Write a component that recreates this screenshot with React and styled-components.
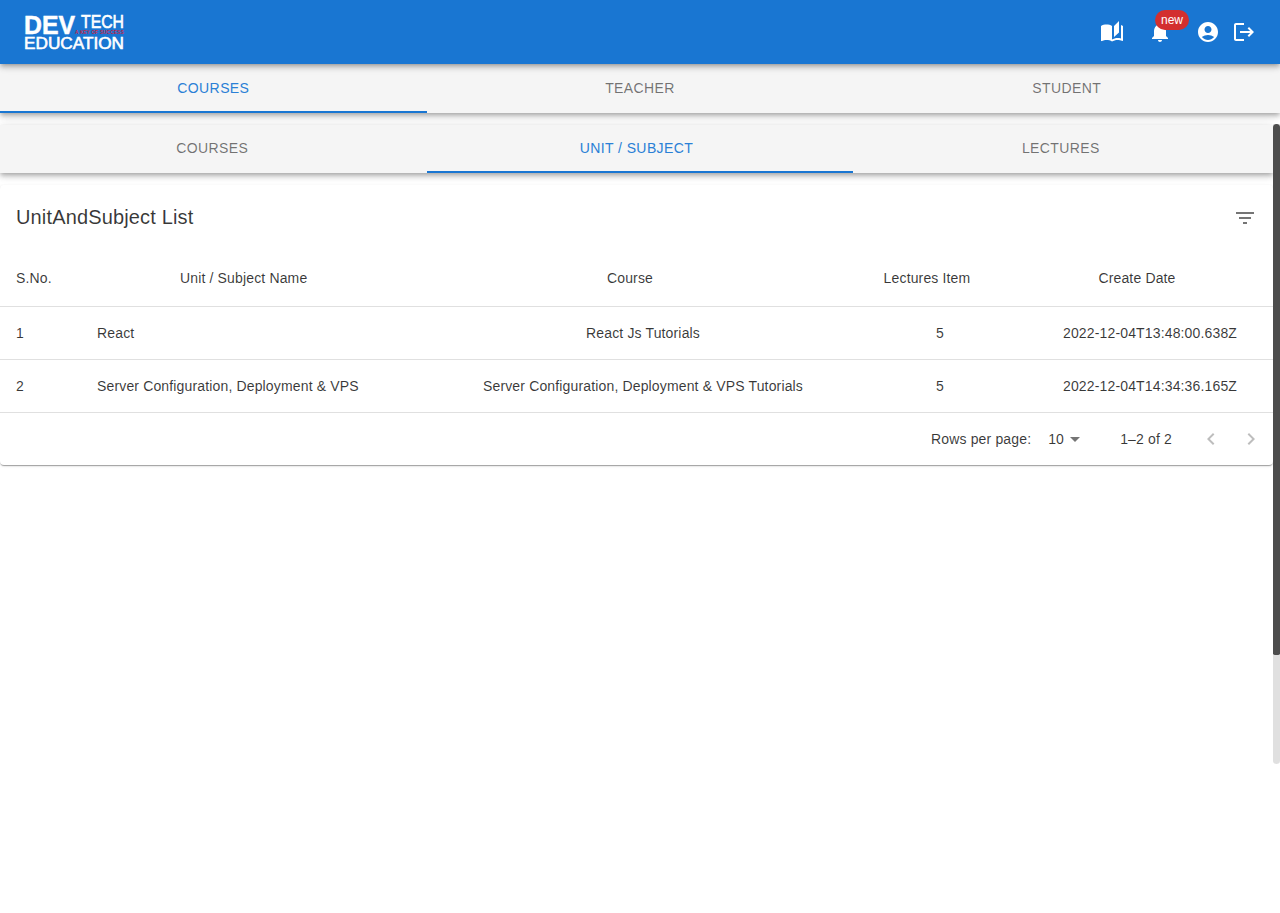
import React from "react";
import styled, { createGlobalStyle } from "styled-components";

const Global = createGlobalStyle`
  html, body { margin: 0; padding: 0; background: #fff; height: 100%; overflow: hidden; }
  body { font-family: "Liberation Sans", Arial, sans-serif; font-size: 14px; letter-spacing: 0.01071em; color: rgba(0,0,0,.78); }
  * { box-sizing: border-box; }
`;

const Page = styled.div`height: 913px; display: flex; flex-direction: column;`;
const Header = styled.header`
  height: 64px; flex: none; background: #1976d2; display: flex; align-items: center; justify-content: space-between;
  padding: 0 24px; position: relative; z-index: 3;
  box-shadow: 0 2px 4px -1px rgba(0,0,0,.2), 0 4px 5px 0 rgba(0,0,0,.14), 0 1px 10px 0 rgba(0,0,0,.12);
`;
const Actions = styled.div`display: flex; align-items: center;`;
const ActionBtn = styled.div`
  width: ${p => (p.$bare ? 24 : 48)}px; height: 48px; display: flex; align-items: center; justify-content: center; position: relative; color: #fff;
`;
const Badge = styled.span`
  position: absolute; left: 19px; top: 2px; width: 34px; height: 20px; border-radius: 10px; background: #d32f2f; color: #fff;
  font-size: 12px; font-weight: 400; display: flex; align-items: center; justify-content: center; letter-spacing: 0;
`;
const TabBar = styled.nav`
  position: relative; display: flex; height: 48px; flex: none; background: #f5f5f5; margin-top: ${p => p.$top || 0}px; z-index: 2;
  box-shadow: 0 2px 4px -1px rgba(0,0,0,.2), 0 4px 5px 0 rgba(0,0,0,.14), 0 1px 10px 0 rgba(0,0,0,.12);
`;
const Tab = styled.div`
  flex: 1; display: flex; align-items: center; justify-content: center; font-size: 14px; font-weight: 400; letter-spacing: 0.02857em; text-transform: uppercase;
  padding-bottom: 2px; color: ${p => (p.$on ? "#2a80d6" : "rgba(0,0,0,.55)")};
`;
const Indicator = styled.span`
  position: absolute; bottom: 0; height: 2px; background: #1976d2; left: ${p => p.$left}px; width: ${p => p.$width}px;
`;
const Scroller = styled.div`display: flex; height: 640px; margin-top: 11px; flex: none;`;
const Content = styled.main`width: 1273px; flex: none; padding-top: 1px;`;
const Track = styled.div`
  width: 7px; flex: none; background: #e0e0e0; border-radius: 0 0 4px 4px; overflow: hidden; position: relative; z-index: 3; display: flex; flex-direction: column;
`;
const Thumb = styled.div`height: 531px; background: #4d4d4d; border-radius: 4px 4px 2px 2px;`;
const Paper = styled.section`
  margin-top: 12px; background: #fff; border-radius: 4px;
  box-shadow: 0 2px 1px -1px rgba(0,0,0,.2), 0 1px 1px 0 rgba(0,0,0,.14), 0 1px 3px 0 rgba(0,0,0,.12);
`;
const Toolbar = styled.div`height: 65px; display: flex; align-items: center; justify-content: space-between; padding: 0 16px;`;
const Title = styled.h2`margin: 0 0 2px; font-size: 20px; font-weight: 400; letter-spacing: 0.0075em; line-height: 1.6; color: rgba(0,0,0,.78);`;
const Filter = styled.div`color: rgba(0,0,0,.54); display: flex;`;
const Row = styled.div`
  display: grid; grid-template-columns: 81px 372px 380px 214px 206px; padding-right: 20px; align-items: center;
  height: ${p => (p.$head ? 57 : 53)}px; border-bottom: 1px solid #e0e0e0;
`;
const Cell = styled.div`
  text-align: ${p => p.$align || "center"}; padding: 0 ${p => p.$pr || 0}px 0 ${p => p.$pl || 0}px; white-space: nowrap; line-height: 1.43;
`;
const Footer = styled.div`height: 52px; display: flex; align-items: center; justify-content: flex-end;`;
const Rows = styled.span`margin-right: 17px;`;
const Select = styled.span`display: flex; align-items: center; width: 72px;`;
const Caret = styled.span`display: flex; color: rgba(0,0,0,.54); margin-left: -1px;`;
const Range = styled.span`margin-right: 27px;`;
const Pager = styled.span`display: flex; align-items: center; gap: 16px; margin-right: 10px; color: rgba(0,0,0,.26);`;
const LogoMark = styled.svg`display: block; overflow: visible;`;

const Icon = ({ d, size = 24 }) => (
  <svg width={size} height={size} viewBox="0 0 24 24" fill="currentColor"><path d={d} /></svg>
);

const icons = {
  book: "M19 1l-5 5v11l5-4.5V1zM1 6v14.65c0 .25.25.5.5.5.1 0 .15-.05.25-.05C3.1 20.45 5.05 20 6.5 20c1.95 0 4.05.4 5.5 1.5 1.35-.85 3.8-1.5 5.5-1.5 1.65 0 3.35.3 4.75 1.05.1.05.15.05.25.05.25 0 .5-.25.5-.5V6c-.6-.45-1.25-.75-2-1v13.5c-1.1-.35-2.3-.5-3.5-.5-1.7 0-4.15.65-5.5 1.5V6c-1.45-1.1-3.55-1.5-5.5-1.5S2.45 4.9 1 6z",
  bell: "M12 22c1.1 0 2-.9 2-2h-4c0 1.1.89 2 2 2zm6-6v-5c0-3.07-1.64-5.64-4.5-6.32V4c0-.83-.67-1.5-1.5-1.5s-1.5.67-1.5 1.5v.68C7.63 5.36 6 7.92 6 11v5l-2 2v1h16v-1l-2-2z",
  user: "M12 2C6.48 2 2 6.48 2 12s4.48 10 10 10 10-4.48 10-10S17.52 2 12 2zm0 4c1.93 0 3.5 1.57 3.5 3.5S13.93 13 12 13s-3.5-1.57-3.5-3.5S10.07 6 12 6zm0 14c-2.03 0-4.43-.82-6.14-2.88C7.55 15.8 9.68 15 12 15s4.45.8 6.14 2.12C16.43 19.18 14.03 20 12 20z",
  logout: "m17 7-1.41 1.41L18.17 11H8v2h10.17l-2.58 2.58L17 17l5-5zM4 5h8V3H4c-1.1 0-2 .9-2 2v14c0 1.1.9 2 2 2h8v-2H4V5z",
  filter: "M10 18h4v-2h-4v2zM3 6v2h18V6H3zm3 7h12v-2H6v2z",
  left: "M15.41 7.41 14 6l-6 6 6 6 1.41-1.41L10.83 12z",
  right: "M10 6 8.59 7.41 13.17 12l-4.58 4.59L10 18l6-6z",
  drop: "M7 10l5 5 5-5z",
};

const Logo = () => (
  <LogoMark width="101" height="36" viewBox="0 0 101 36">
    <g fill="#fff" fontFamily="'Liberation Sans', sans-serif" letterSpacing="0">
      <text x="0" y="20" fontSize="26" fontWeight="700" stroke="#fff" strokeWidth="0.5" textLength="51" lengthAdjust="spacingAndGlyphs">DEV</text>
      <text x="57" y="14" fontSize="17.5" stroke="#fff" strokeWidth="0.6" textLength="43" lengthAdjust="spacingAndGlyphs">TECH</text>
      <text x="0" y="35" fontSize="17" stroke="#fff" strokeWidth="0.6" textLength="100" lengthAdjust="spacingAndGlyphs">EDUCATION</text>
    </g>
    <text x="51" y="19.5" fontSize="5" fontWeight="700" fontFamily="'Liberation Sans', sans-serif" fill="#c2274b" textLength="49" lengthAdjust="spacingAndGlyphs">A KEY OF SUCCESS</text>
  </LogoMark>
);

const data = [
  ["1", "React", "React Js Tutorials", "5", "2022-12-04T13:48:00.638Z"],
  ["2", "Server Configuration, Deployment & VPS", "Server Configuration, Deployment & VPS Tutorials", "5", "2022-12-04T14:34:36.165Z"],
];

export default function App() {
  return (
    <Page>
      <Global />
      <Header>
        <Logo />
        <Actions>
          <ActionBtn><Icon d={icons.book} /></ActionBtn>
          <ActionBtn><Icon d={icons.bell} /><Badge>new</Badge></ActionBtn>
          <ActionBtn><Icon d={icons.user} /></ActionBtn>
          <ActionBtn $bare><Icon d={icons.logout} /></ActionBtn>
        </Actions>
      </Header>
      <TabBar $top={1}>
        <Tab $on>Courses</Tab>
        <Tab>Teacher</Tab>
        <Tab>Student</Tab>
        <Indicator $left={0} $width={427} />
      </TabBar>
      <Scroller>
        <Content>
          <TabBar>
            <Tab>Courses</Tab>
            <Tab $on>Unit / Subject</Tab>
            <Tab>Lectures</Tab>
            <Indicator $left={427} $width={426} />
          </TabBar>
          <Paper>
            <Toolbar>
              <Title>UnitAndSubject List</Title>
              <Filter><Icon d={icons.filter} /></Filter>
            </Toolbar>
            <Row $head>
              <Cell $align="left" $pl={16}>S.No.</Cell>
              <Cell $align="left" $pl={99}>Unit / Subject Name</Cell>
              <Cell $pr={26}>Course</Cell>
              <Cell $pr={26}>Lectures Item</Cell>
              <Cell $pr={26}>Create Date</Cell>
            </Row>
            {data.map(r => (
              <Row key={r[0]}>
                <Cell $align="left" $pl={16}>{r[0]}</Cell>
                <Cell $align="left" $pl={16}>{r[1]}</Cell>
                <Cell>{r[2]}</Cell>
                <Cell>{r[3]}</Cell>
                <Cell>{r[4]}</Cell>
              </Row>
            ))}
            <Footer>
              <Rows>Rows per page:</Rows>
              <Select>10<Caret><Icon d={icons.drop} /></Caret></Select>
              <Range>1–2 of 2</Range>
              <Pager><Icon d={icons.left} /><Icon d={icons.right} /></Pager>
            </Footer>
          </Paper>
        </Content>
        <Track><Thumb /></Track>
      </Scroller>
    </Page>
  );
}
